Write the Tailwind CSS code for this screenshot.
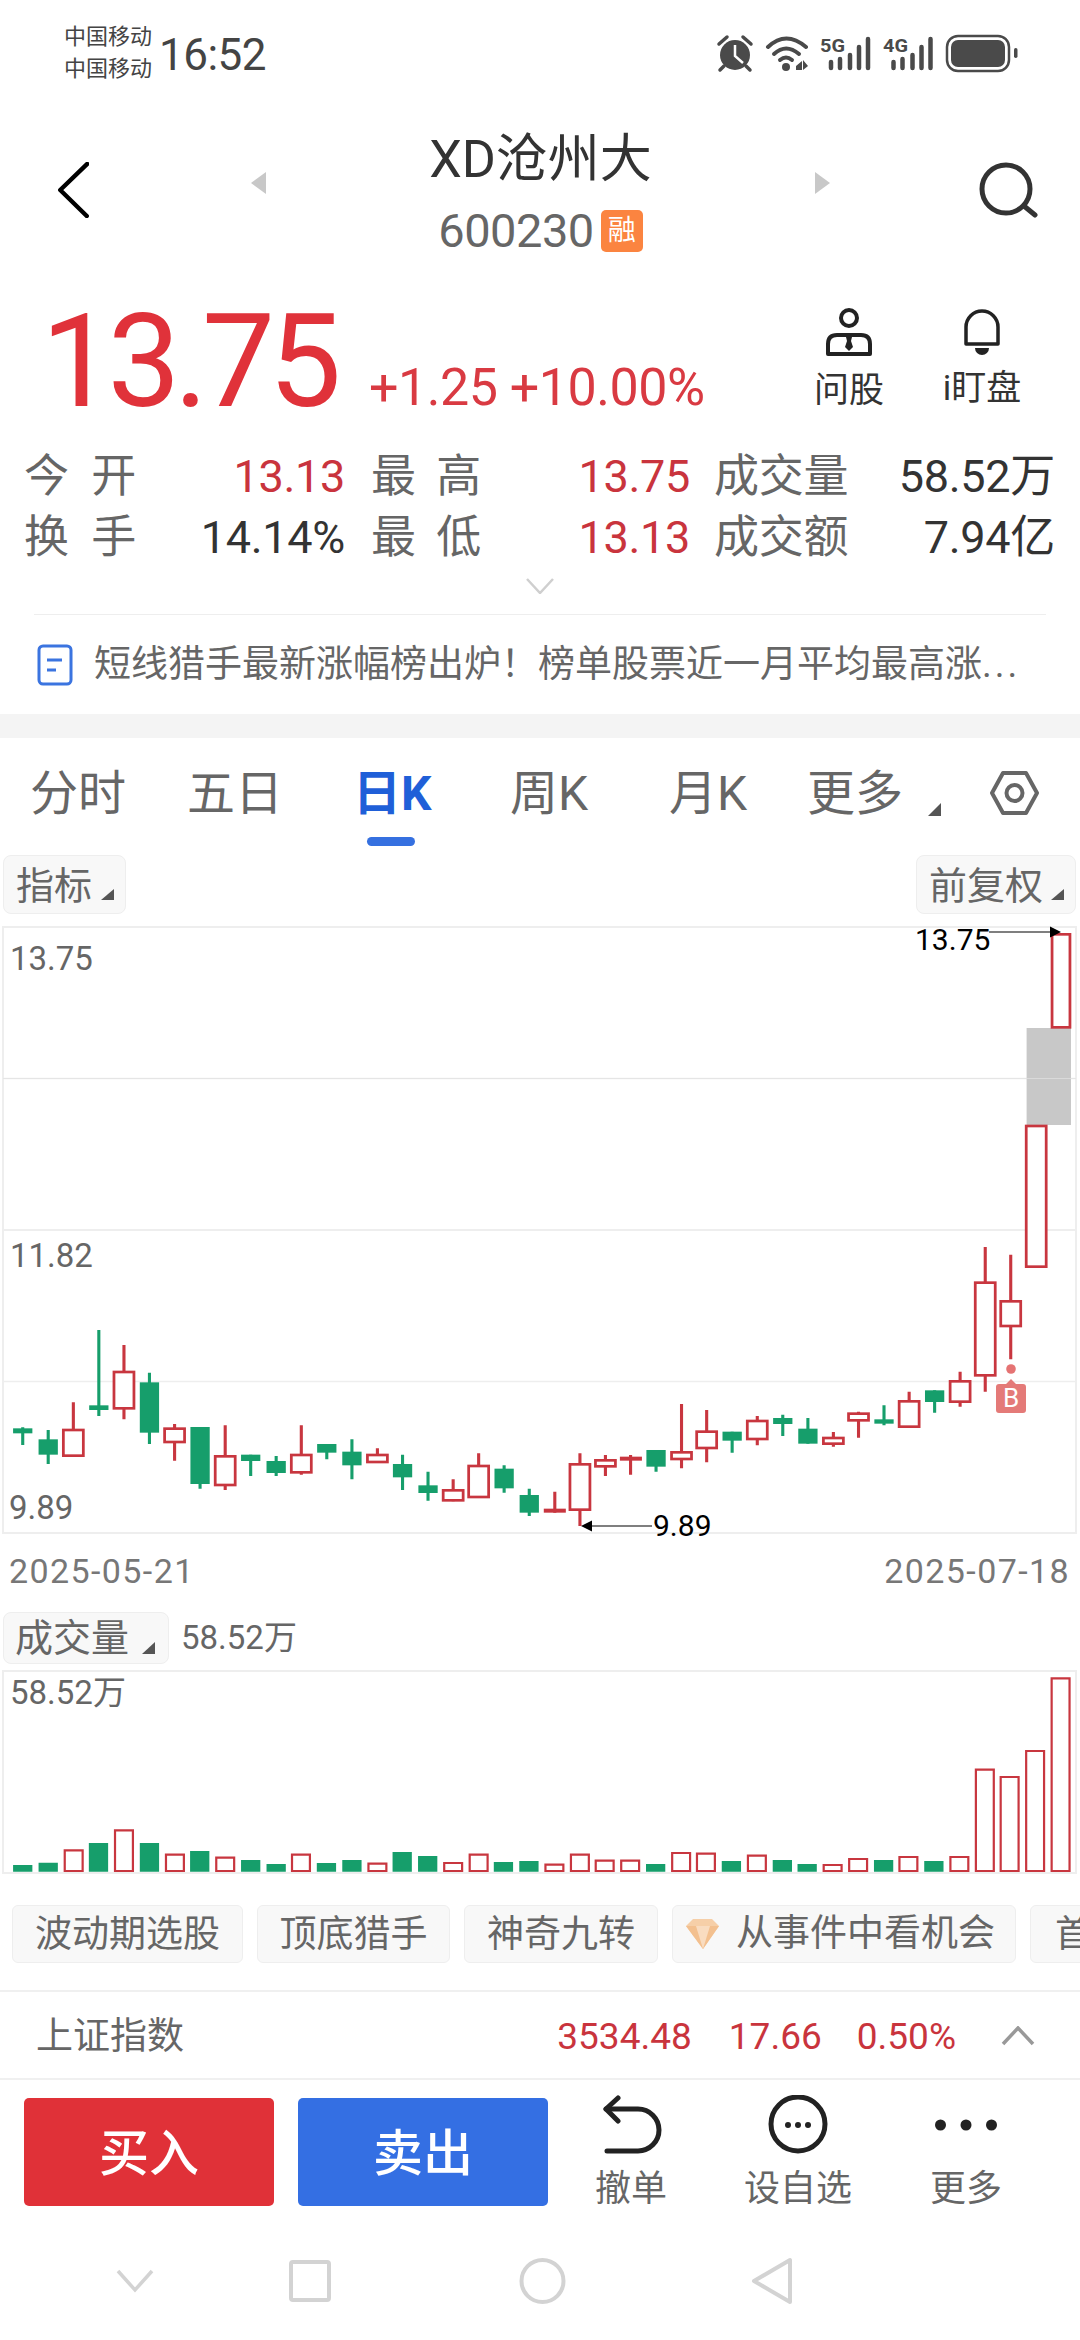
<!DOCTYPE html>
<html lang="zh-CN">
<head>
<meta charset="utf-8">
<script src="https://cdn.jsdelivr.net/npm/@tailwindcss/browser@4"></script>
<title>XD沧州大</title>
</head>
<body>
<div class="w-[1080px] h-[2340px] overflow-hidden bg-white text-[#666] font-['Roboto','Noto_Sans_CJK_SC',sans-serif]">

  <!-- status bar -->
  <div class="h-[130px] flex items-start">
    <div class="ml-[64px] mt-[21px] w-[95px] text-[22px] leading-[32px] text-[#444]"><div>中国移动</div><div>中国移动</div></div>
    <div class="mt-[30px] text-[44px] leading-[50px] text-[#444] tracking-[-0.5px]">16:52</div>
    <svg class="ml-auto mr-[50px] mt-[30px] w-[320px] h-[50px]" viewBox="710 30 320 50">
      <g fill="#4a4a4a" stroke="none">
        <circle cx="735" cy="55" r="15"/>
        <path d="M735 45V56L743 63" stroke="#fff" stroke-width="2.5" fill="none"/>
        <path d="M719 44L727 37M751 44L743 37M724 66L720 70M746 66L750 70" stroke="#4a4a4a" stroke-width="3.5" stroke-linecap="round" fill="none"/>
      </g>
      <g fill="none" stroke="#4a4a4a" stroke-width="4" stroke-linecap="round">
        <path d="M768 47Q786 30 806 47"/>
        <path d="M774 54Q786 43 799 54"/>
        <path d="M780 60Q786 55 792 60"/>
      </g>
      <circle cx="786" cy="67" r="4" fill="#4a4a4a"/>
      <path d="M796 70V66L802 61V70ZM803 60V70L808 66Z" fill="#4a4a4a"/>
      <text x="820" y="52" font-size="19" font-weight="700" fill="#4a4a4a" textLength="25" lengthAdjust="spacingAndGlyphs">5G</text>
      <g stroke="#4a4a4a" stroke-width="4.5" stroke-linecap="round">
        <path d="M831 62V68M840 59V68M850 55V68M859 47V68M868 39V68"/>
        <path d="M893.500 62V68M902.500 59V68M912.500 55V68M921.500 47V68M930.500 39V68"/>
      </g>
      <text x="883" y="52" font-size="19" font-weight="700" fill="#4a4a4a" textLength="25" lengthAdjust="spacingAndGlyphs">4G</text>
      <rect x="947" y="36" width="62" height="35" rx="11" fill="none" stroke="#4a4a4a" stroke-width="2.500"/>
      <rect x="951" y="40" width="54" height="27" rx="7" fill="#4a4a4a"/>
      <rect x="1014" y="48" width="3.500" height="10" rx="1.700" fill="#4a4a4a"/>
    </svg>
  </div>

  <!-- header -->
  <div class="h-[132px] flex items-start pl-[58px]">
    <svg class="mt-[32px] w-[31px] h-[56px]" viewBox="57 161 31 57"><path d="M86.500 163L59 189.500L86 216" fill="none" stroke="#000" stroke-width="4.500" stroke-linecap="round" stroke-linejoin="round"/></svg>
    <svg class="ml-[162px] mt-[42px] w-[15px] h-[22px]" viewBox="0 0 15 22"><path d="M15 0V22L0 11Z" fill="#c8c8c8"/></svg>
    <div class="w-[549px] flex flex-col items-center">
      <div class="text-[52px] leading-[60px] text-[#333]">XD沧州大</div>
      <div class="flex items-center mt-[11px] h-[60px]">
        <span class="text-[47px] leading-[60px] text-[#666] tracking-[-0.500px]">600230</span>
        <span class="ml-[7px] w-[42px] h-[42px] rounded-[5px] bg-[#fb8440] text-white text-[28px] leading-[42px] text-center">融</span>
      </div>
    </div>
    <svg class="mt-[42px] w-[15px] h-[22px]" viewBox="0 0 15 22"><path d="M0 0V22L15 11Z" fill="#c8c8c8"/></svg>
    <svg class="ml-[148px] mt-[32px] w-[60px] h-[56px]" viewBox="978 161 60 56"><circle cx="1006" cy="188" r="24" fill="none" stroke="#333" stroke-width="5"/><path d="M1024 205L1035 214" stroke="#333" stroke-width="5" stroke-linecap="round"/></svg>
  </div>

  <!-- price -->
  <div class="h-[184px] flex items-start">
    <div class="ml-[41px] mt-[35px] w-[328px] text-[130px] leading-[130px] text-[#e0323a] tracking-[-6.500px]">13.75</div>
    <div class="mt-[99px] w-[446px] text-[52px] leading-[54px] text-[#d93a42] tracking-[-0.500px] whitespace-nowrap">+1.25 +10.00%</div>
    <div class="w-[68px] mt-[46px] flex flex-col items-center">
      <svg class="w-[48px] h-[48px]" viewBox="824 308 48 48">
        <circle cx="848" cy="318" r="8" fill="none" stroke="#222" stroke-width="4"/>
        <path d="M827 354V344Q827 335 836 335H860Q869 335 869 344V354Z" fill="none" stroke="#222" stroke-width="4" stroke-linejoin="round"/>
        <path d="M845 337H851L850 341L852 347L848 351L844 347L846 341Z" fill="#222"/>
      </svg>
      <div class="mt-[18px] text-[35px] leading-[34px] text-[#333] whitespace-nowrap">问股</div>
    </div>
    <div class="ml-[60px] w-[78px] mt-[46px] flex flex-col items-center">
      <svg class="w-[40px] h-[48px]" viewBox="962 308 40 48">
        <path d="M966 344V327a16 16 0 0 1 32 0V344Z" fill="none" stroke="#222" stroke-width="3.500" stroke-linejoin="round"/>
        <path d="M975 348H989a7 7 0 0 1-14 0Z" fill="#222"/>
      </svg>
      <div class="mt-[16px] text-[35px] leading-[34px] text-[#333] whitespace-nowrap">i盯盘</div>
    </div>
  </div>

  <!-- stats -->
  <div class="ml-[24px] w-[1031px] grid grid-cols-[112px_209px_136px_209px_157px_208px] auto-rows-[61px] items-center text-[45px] leading-[61px] tracking-[-0.300px] whitespace-nowrap">
    <div class="flex justify-between">今<span>开</span></div>
    <div class="text-right text-[#c9343d]">13.13</div>
    <div class="pl-[26px] flex justify-between">最<span>高</span></div>
    <div class="text-right text-[#c9343d]">13.75</div>
    <div class="pl-[24px]">成交量</div>
    <div class="text-right text-[#333]">58.52万</div>
    <div class="flex justify-between">换<span>手</span></div>
    <div class="text-right text-[#333]">14.14%</div>
    <div class="pl-[26px] flex justify-between">最<span>低</span></div>
    <div class="text-right text-[#c9343d]">13.13</div>
    <div class="pl-[24px]">成交额</div>
    <div class="text-right text-[#333]">7.94亿</div>
  </div>
  <svg class="block mx-auto mt-[10px] w-[28px] h-[16px]" viewBox="0 0 28 16"><path d="M1 1L14 15L27 1" fill="none" stroke="#cfcfcf" stroke-width="2.500"/></svg>
  <div class="mt-[20px] mx-[34px] h-[1px] bg-[#eee]"></div>

  <!-- news -->
  <div class="h-[99px] flex items-center">
    <svg class="ml-[37px] w-[36px] h-[42px]" viewBox="37 643 36 42">
      <rect x="39" y="645" width="32" height="38" rx="4" fill="none" stroke="#3b74e0" stroke-width="3"/>
      <path d="M47 659H62M47 669H56" stroke="#3b74e0" stroke-width="3"/>
    </svg>
    <div class="ml-[21px] w-[940px] text-[37px] leading-[50px] text-[#666] whitespace-nowrap overflow-hidden [text-spacing-trim:space-all]">短线猎手最新涨幅榜出炉！榜单股票近一月平均最高涨<span class="tracking-[3px]">...</span></div>
  </div>
  <div class="h-[24px] bg-[#f4f4f4]"></div>

  <!-- tabs -->
  <div class="h-[117px] flex items-start pl-[30px] pt-[31px] text-[48px] leading-[50px] text-[#666]">
    <div class="w-[94px] whitespace-nowrap">分时</div>
    <div class="ml-[63px] w-[91px] whitespace-nowrap">五日</div>
    <div class="ml-[75px] w-[82px] relative font-bold text-[#1f5fd8] whitespace-nowrap">日K<span class="absolute left-[14px] top-[68px] w-[48px] h-[9px] rounded-full bg-[#3570e0]"></span></div>
    <div class="ml-[75px] w-[81px] whitespace-nowrap">周K</div>
    <div class="ml-[78px] w-[80px] whitespace-nowrap">月K</div>
    <div class="ml-[58px] w-[92px] whitespace-nowrap">更多</div>
    <svg class="ml-[29px] mt-[34px] w-[13px] h-[13px]" viewBox="0 0 13 13"><path d="M13 0V13H0Z" fill="#555"/></svg>
    <svg class="ml-[49px] mt-[1px] w-[49px] h-[46px]" viewBox="990 770 49 46">
      <path d="M992 793L1003 773H1026L1037 793L1026 813H1003Z" fill="none" stroke="#666" stroke-width="4" stroke-linejoin="round"/>
      <circle cx="1014.500" cy="793" r="8" fill="none" stroke="#666" stroke-width="4"/>
    </svg>
  </div>

  <!-- chart tools -->
  <div class="h-[59px] flex justify-between pl-[3px] pr-[4px]">
    <div class="w-[123px] rounded-[8px] border border-[#eee] bg-[#f8f8f8] flex items-center pl-[12px] pt-[3px] text-[38px] leading-[54px]">指标<svg class="ml-[9px] mt-[17px] w-[13px] h-[11px]" viewBox="0 0 13 11"><path d="M13 0V11H0Z" fill="#555"/></svg></div>
    <div class="w-[160px] rounded-[8px] border border-[#eee] bg-[#f8f8f8] flex items-center pl-[12px] pt-[3px] text-[38px] leading-[54px] whitespace-nowrap">前复权<svg class="ml-[8px] mt-[17px] w-[13px] h-[11px]" viewBox="0 0 13 11"><path d="M13 0V11H0Z" fill="#555"/></svg></div>
  </div>

  <!-- candlestick chart -->
  <div class="relative mt-[6px] h-[616px]">
    <svg class="block w-[1080px] h-[616px]" viewBox="0 920 1080 616">
      <g stroke="#eeeeee" fill="none">
        <path d="M3 927H1076V1533H3Z" stroke-width="2"/>
        <path d="M3 1078.500H1076M3 1381.500H1076" stroke-width="1.500"/>
        <path d="M3 1230H1076" stroke-width="2"/>
      </g>
      <rect x="1026.600" y="1028" width="44.400" height="97" fill="#c8c8c8"/>
      <path d="M3 1078.500H1076" stroke="#e2e2e2" stroke-width="1" opacity="0.700"/>

      <g transform="translate(0,1180) scale(0.34435,0.33333)">
        <g stroke="#169e6b" stroke-width="9" fill="none">
          <path d="M66 742V795M140 750V852M287 450V708M434 578V792M581 741V926M728 824V888M802 828V888M949 792V838M1022 778V898M1169 824V930M1243 875V962M1464 856V938M1537 926V1008"/>
        </g>
        <g fill="#169e6b">
          <rect x="38" y="745" width="56" height="15"/><rect x="112" y="778" width="56" height="46"/><rect x="259" y="676" width="56" height="14"/><rect x="406" y="607" width="56" height="151"/><rect x="553" y="741" width="56" height="171"/><rect x="700" y="824" width="56" height="19"/><rect x="774" y="843" width="56" height="36"/><rect x="921" y="792" width="56" height="26"/><rect x="994" y="815" width="56" height="41"/><rect x="1141" y="852" width="56" height="40"/><rect x="1215" y="916" width="56" height="23"/><rect x="1436" y="866" width="56" height="59"/><rect x="1509" y="945" width="56" height="53"/>
        </g>
        <path d="M213 667V830M360 495V718M507 732V842M654 736V930M875 736V884M1096 805V849M1316 898V964M1390 820V954" stroke="#c8363f" stroke-width="9" fill="none"/>
        <g fill="#fff" stroke="#c8363f" stroke-width="8">
          <rect x="184" y="750" width="58" height="77"/><rect x="331" y="576" width="58" height="109"/><rect x="478" y="746" width="58" height="40"/><rect x="625" y="829" width="58" height="86"/><rect x="846" y="825" width="58" height="52"/><rect x="1067" y="825" width="58" height="21"/><rect x="1287" y="931" width="58" height="30"/><rect x="1361" y="858" width="58" height="93"/>
        </g>
      </g>

      <g transform="translate(540,1180) scale(0.34435,0.33333)">
        <path d="M337 810V875M558 755V818M705 704V768M778 714V791M999 676V736M1146 631V698" stroke="#169e6b" stroke-width="9" fill="none"/>
        <g fill="#169e6b">
          <rect x="309" y="810" width="56" height="50"/><rect x="530" y="755" width="56" height="27"/><rect x="677" y="714" width="56" height="18"/><rect x="750" y="746" width="56" height="45"/><rect x="971" y="718" width="56" height="13"/><rect x="1118" y="631" width="56" height="35"/>
        </g>
        <path d="M43 935V998M116 820V1038M190 825V888M263 825V884M411 672V865M484 690V847M631 708V796M852 756V800M925 695V773M1072 635V743M1220 575V680M1293 201V635M1367 224V538" stroke="#c8363f" stroke-width="9" fill="none"/>
        <rect x="11" y="986" width="64" height="12" fill="#c8363f"/>
        <rect x="232" y="830" width="64" height="12" fill="#c8363f"/>
        <g fill="#fff" stroke="#c8363f" stroke-width="8">
          <rect x="87" y="853" width="58" height="136"/><rect x="161" y="841" width="58" height="18"/><rect x="382" y="817" width="58" height="20"/><rect x="455" y="755" width="58" height="49"/><rect x="602" y="723" width="58" height="54"/><rect x="823" y="774" width="58" height="17"/><rect x="896" y="701" width="58" height="20"/><rect x="1043" y="664" width="58" height="76"/><rect x="1191" y="604" width="58" height="61"/><rect x="1264" y="308" width="58" height="278"/><rect x="1338" y="364" width="58" height="74"/><rect x="1412" y="-162" width="58" height="422"/><rect x="1487" y="-737" width="52" height="279"/>
        </g>
      </g>

      <path d="M989 932H1052" stroke="#555" stroke-width="1.500"/>
      <path d="M1050 926.500L1061 932L1050 937.500Z" fill="#000"/>
      <path d="M592 1526H652" stroke="#555" stroke-width="1.500"/>
      <path d="M592 1520.500L581 1526L592 1531.500Z" fill="#000"/>
      <circle cx="1011" cy="1369" r="4.800" fill="#e57373"/>
      <path d="M999 1384H1006L1011 1379L1016 1384H1023Q1026 1384 1026 1387V1410Q1026 1413 1023 1413H999Q996 1413 996 1410V1387Q996 1384 999 1384Z" fill="#e47a78"/>
    </svg>
    <span class="absolute left-[10px] top-[19px] text-[33px] leading-[40px] text-[#666]">13.75</span>
    <span class="absolute left-[10px] top-[316px] text-[33px] leading-[40px] text-[#666]">11.82</span>
    <span class="absolute left-[9px] top-[568px] text-[33px] leading-[40px] text-[#666]">9.89</span>
    <span class="absolute left-[915px] top-[0px] text-[30px] leading-[40px] text-black">13.75</span>
    <span class="absolute left-[653px] top-[586px] text-[30px] leading-[40px] text-black">9.89</span>
    <span class="absolute left-[996px] top-[464px] w-[30px] text-center text-[26px] leading-[28px] text-white">B</span>
  </div>

  <!-- dates -->
  <div class="h-[76px] pt-[15px] flex justify-between pl-[9px] pr-[10px] text-[34px] leading-[40px] text-[#777] tracking-[1.400px]">
    <span>2025-05-21</span><span>2025-07-18</span>
  </div>

  <!-- volume -->
  <div class="h-[52px] flex items-center pl-[3px]">
    <div class="w-[166px] h-[52px] rounded-[8px] border border-[#eee] bg-[#f8f8f8] flex items-center pl-[11px] text-[38px] leading-[50px] whitespace-nowrap">成交量<svg class="ml-[13px] mt-[20px] w-[13px] h-[12px]" viewBox="0 0 13 12"><path d="M13 0V12H0Z" fill="#555"/></svg></div>
    <span class="ml-[12px] text-[33px] leading-[50px]">58.52万</span>
  </div>
  <div class="relative mt-[4px] h-[208px]">
    <svg class="block w-[1080px] h-[208px]" viewBox="0 1668 1080 208">
      <path d="M3 1671H1076V1873H3Z" fill="none" stroke="#eee" stroke-width="2"/>
      <g transform="translate(0,1580) scale(0.68870,0.33333)">
        <path fill="#169e6b" d="M19 855h28V875h-28zM56 848h28V875h-28zM129 789h28V875h-28zM203 789h28V875h-28zM276 813h28V875h-28zM350 840h28V875h-28zM387 852h28V875h-28zM460 849h28V875h-28zM497 840h28V875h-28zM570 816h28V875h-28zM607 828h28V875h-28zM717 846h28V875h-28zM754 843h28V875h-28zM938 852h28V875h-28zM1048 843h28V875h-28zM1122 840h28V875h-28zM1158 852h28V875h-28zM1269 840h28V875h-28zM1342 843h28V875h-28z"/>
        <path fill="#fff" stroke="#c8363f" stroke-width="2.200" vector-effect="non-scaling-stroke" d="M94 811h26V873h-26zM167 751h26V873h-26zM241 824h26V873h-26zM314 833h26V873h-26zM424 824h26V873h-26zM535 851h26V873h-26zM645 849h26V873h-26zM682 824h26V873h-26zM792 854h26V873h-26zM829 824h26V873h-26zM865 842h26V873h-26zM902 842h26V873h-26zM976 819h26V873h-26zM1012 821h26V873h-26zM1086 827h26V873h-26zM1196 855h26V873h-26zM1233 837h26V873h-26zM1306 831h26V873h-26zM1380 831h26V873h-26zM1417 569h26V873h-26zM1453 591h26V873h-26zM1490 513h26V873h-26zM1527 295h26V873h-26z"/>
      </g>
    </svg>
    <span class="absolute left-[10px] top-[5px] text-[33px] leading-[40px]">58.52万</span>
  </div>

  <!-- chips -->
  <div class="mt-[29px] h-[58px] flex gap-[14px] pl-[12px] overflow-hidden text-[37px] leading-[58px] whitespace-nowrap">
    <div class="shrink-0 w-[231px] text-center rounded-[6px] border border-[#eee] bg-[#f8f8f8]">波动期选股</div>
    <div class="shrink-0 w-[193px] text-center rounded-[6px] border border-[#eee] bg-[#f8f8f8]">顶底猎手</div>
    <div class="shrink-0 w-[194px] text-center rounded-[6px] border border-[#eee] bg-[#f8f8f8]">神奇九转</div>
    <div class="shrink-0 w-[344px] flex items-center rounded-[6px] border border-[#eee] bg-[#f8f8f8] pl-[13px]">
      <svg class="w-[34px] h-[30px]" viewBox="685 1918 34 30">
        <path d="M685 1925L692 1918H711L718 1925L702 1948Z" fill="#f6cfa8"/>
        <path d="M685 1925H718L702 1948Z" fill="#f3c08f"/>
        <path d="M695 1925L702 1948L709 1925Z" fill="#f9dcc0"/>
      </svg>
      <span class="ml-[16px]">从事件中看机会</span>
    </div>
    <div class="shrink-0 w-[120px] rounded-[6px] border border-[#eee] bg-[#f8f8f8] pl-[24px]">首</div>
  </div>

  <!-- index -->
  <div class="mt-[27px] h-[90px] border-t-2 border-b-2 border-[#f0f0f0] flex items-center pt-[4px] pl-[36px] pr-[45px] text-[37px] leading-[50px]">
    <span>上证指数</span>
    <span class="ml-auto text-[#c9343d]">3534.48</span>
    <span class="ml-[37px] text-[#c9343d]">17.66</span>
    <span class="ml-[35px] text-[#c9343d]">0.50%</span>
    <svg class="ml-[45px] -mt-[2px] w-[34px] h-[20px]" viewBox="0 0 34 20"><path d="M2 18L17 2L32 18" fill="none" stroke="#999" stroke-width="3.500"/></svg>
  </div>

  <!-- actions -->
  <div class="h-[170px] flex items-start pt-[15px] pl-[24px]">
    <div class="mt-[3px] w-[250px] h-[108px] rounded-[5px] bg-[#e03138] text-white text-[50px] leading-[112px] text-center font-medium">买入</div>
    <div class="ml-[24px] mt-[3px] w-[250px] h-[108px] rounded-[5px] bg-[#346fe3] text-white text-[50px] leading-[112px] text-center font-medium">卖出</div>
    <div class="ml-[13px] w-[140px] flex flex-col items-center">
      <svg class="w-[80px] h-[60px]" viewBox="591 2095 80 60">
        <path d="M606 2109H638a21 21 0 0 1 0 42H607" fill="none" stroke="#222" stroke-width="5" stroke-linecap="round"/>
        <path d="M618 2098L606 2109L618 2121" fill="none" stroke="#222" stroke-width="5" stroke-linecap="round" stroke-linejoin="round"/>
      </svg>
      <div class="mt-[16px] text-[36px] leading-[36px] whitespace-nowrap">撤单</div>
    </div>
    <div class="ml-[27px] w-[140px] flex flex-col items-center">
      <svg class="w-[64px] h-[60px]" viewBox="766 2095 64 60">
        <circle cx="798" cy="2124" r="27" fill="none" stroke="#222" stroke-width="5"/>
        <circle cx="788" cy="2125" r="3" fill="#222"/><circle cx="798" cy="2125" r="3" fill="#222"/><circle cx="808" cy="2125" r="3" fill="#222"/>
      </svg>
      <div class="mt-[16px] text-[36px] leading-[36px] whitespace-nowrap">设自选</div>
    </div>
    <div class="ml-[28px] w-[140px] flex flex-col items-center">
      <svg class="w-[70px] h-[60px]" viewBox="931 2095 70 60">
        <circle cx="940.500" cy="2125" r="5.500" fill="#222"/><circle cx="966" cy="2125" r="5.500" fill="#222"/><circle cx="991.500" cy="2125" r="5.500" fill="#222"/>
      </svg>
      <div class="mt-[16px] text-[36px] leading-[36px] whitespace-nowrap">更多</div>
    </div>
  </div>

  <!-- nav -->
  <div class="h-[60px] mt-[1px] flex items-center pl-[116px]">
    <svg class="w-[38px] h-[24px]" viewBox="116 2270 38 24"><path d="M118 2272L135 2291L152 2272" fill="none" stroke="#d3d3d3" stroke-width="3.500"/></svg>
    <svg class="ml-[134px] w-[44px] h-[44px]" viewBox="287 2260 44 44"><rect x="290" y="2263" width="38" height="38" rx="2" fill="none" stroke="#d3d3d3" stroke-width="4"/></svg>
    <svg class="ml-[187px] w-[48px] h-[48px]" viewBox="517 2258 48 48"><circle cx="540.500" cy="2282" r="21" fill="none" stroke="#d3d3d3" stroke-width="4"/></svg>
    <svg class="ml-[184px] w-[42px] h-[48px]" viewBox="748 2258 42 48"><path d="M787 2261V2303L751 2282Z" fill="none" stroke="#d3d3d3" stroke-width="4" stroke-linejoin="round"/></svg>
  </div>
</div>
</body>
</html>
